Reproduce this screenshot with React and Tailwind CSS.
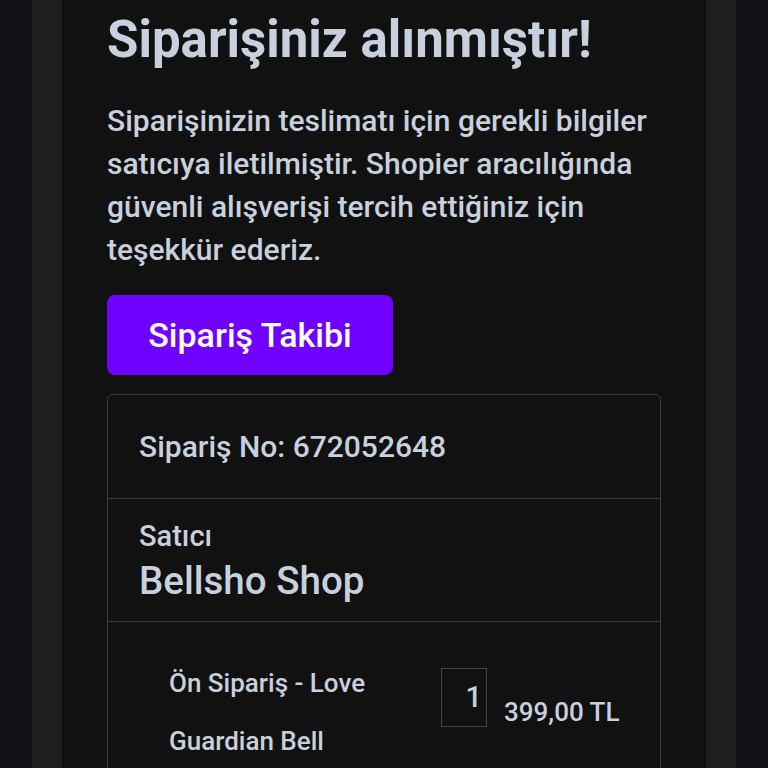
import React from "react";

const OrderSuccess = () => {
  return (
    <div className="h-screen overflow-hidden bg-[#111014] flex justify-center" style={{ fontFamily: "Roboto, 'Noto Sans', sans-serif" }}>
      <div className="w-[704px] flex bg-[#1d1e1f] px-[30px]">
        <div className="flex-1 bg-[#111111] px-[45px] pt-[8px] pb-10">
          {/* Header */}
          <h1 className="text-[51px] leading-[64px] font-bold text-[#c8d0de] whitespace-nowrap">Siparişiniz alınmıştır!</h1>
          <p className="mt-[27px] text-[30px] leading-[43px] font-medium text-[#c8d0de]">
            Siparişinizin teslimatı için gerekli bilgiler satıcıya iletilmiştir. Shopier aracılığında güvenli alışverişi tercih ettiğiniz için teşekkür ederiz.
          </p>

          <button className="mt-[24px] w-[286px] h-[80px] rounded-lg bg-[#7000ff] text-white text-[34px] font-medium">
            Sipariş Takibi
          </button>

          {/* Order card */}
          <div className="mt-[19px] border border-[#3b3b3b] rounded-md">
            <div className="h-[104px] flex items-center px-[31px] border-b border-[#3b3b3b]">
              <span className="text-[30px] font-medium text-[#c8d0de]">Sipariş No: 672052648</span>
            </div>
            <div className="px-[31px] pt-[19px] pb-[17px] border-b border-[#3b3b3b]">
              <div className="text-[29px] leading-[36px] font-medium text-[#c8d0de]">Satıcı</div>
              <div className="mt-[4px] text-[38.5px] leading-[46px] font-medium text-[#c8d0de]">Bellsho Shop</div>
            </div>
            <div className="flex pl-[61px] pr-[40px] pt-[32px] pb-6">
              <div className="w-[250px] text-[26px] leading-[58px] font-medium text-[#c8d0de]">
                Ön Sipariş - Love Guardian Bell
              </div>
              <div className="ml-[22px] mt-[14px] w-[46px] h-[59px] border border-[#444444] flex items-center justify-end pr-[4px]">
                <span className="text-[29px] font-medium text-[#c8d0de]">1</span>
              </div>
              <div className="ml-[17px] mt-[41px] text-[26px] leading-[34px] font-medium text-[#c8d0de] whitespace-nowrap">399,00 TL</div>
            </div>
          </div>
        </div>
      </div>
    </div>
  );
};

export default function App() {
  return <OrderSuccess />;
}
